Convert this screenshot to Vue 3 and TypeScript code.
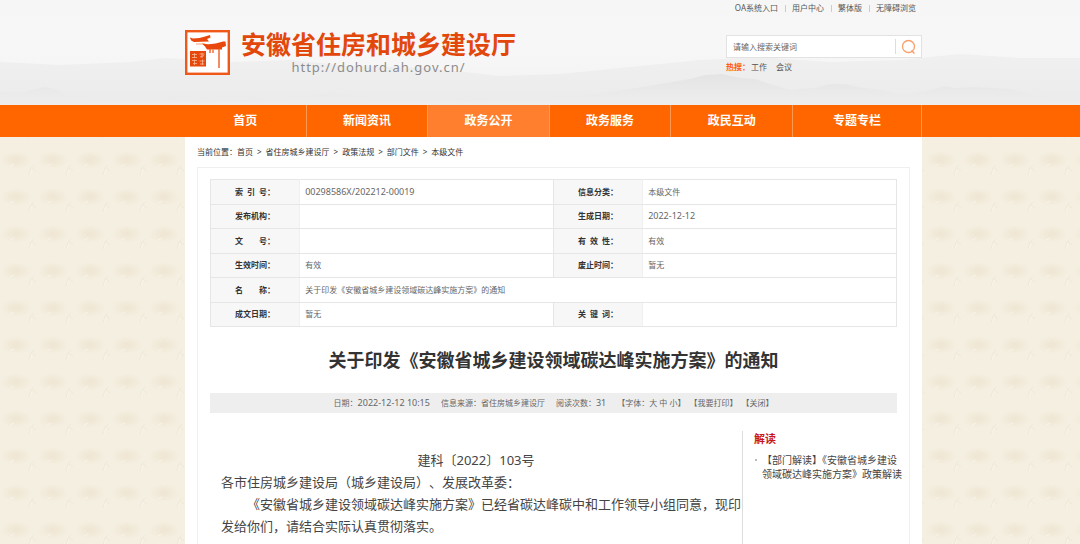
<script setup lang="ts">
import { ref } from 'vue'

interface Cell {
  label: string
  value: string
  wide?: boolean
}

const keyword = ref('')

const topLinks: string[] = ['OA系统入口', '用户中心', '繁体版', '无障碍浏览']
const hotWords: string[] = ['工作', '会议']
const navItems: string[] = ['首页', '新闻资讯', '政务公开', '政务服务', '政民互动', '专题专栏']
const activeNav = '政务公开'
const crumbs: string[] = ['首页', '省住房城乡建设厅', '政策法规', '部门文件', '本级文件']

const rows: Cell[][] = [
  [{ label: '索\u2002引\u2002号：', value: '00298586X/202212-00019' }, { label: '信息分类：', value: '本级文件' }],
  [{ label: '发布机构：', value: '' }, { label: '生成日期：', value: '2022-12-12' }],
  [{ label: '文\u3000\u3000号：', value: '' }, { label: '有\u2002效\u2002性：', value: '有效' }],
  [{ label: '生效时间：', value: '有效' }, { label: '废止时间：', value: '暂无' }],
  [{ label: '名\u3000\u3000称：', value: '关于印发《安徽省城乡建设领域碳达峰实施方案》的通知', wide: true }],
  [{ label: '成文日期：', value: '暂无' }, { label: '关\u2002键\u2002词：', value: '' }],
]

const isLatin = (text: string): boolean => /^[\x20-\x7e]+$/.test(text)
</script>

<template>
  <div class="page">
    <header class="header band">
      <svg class="hills" viewBox="0 0 1080 105" preserveAspectRatio="none" aria-hidden="true">
        <defs>
          <linearGradient id="far" x1="0" y1="0" x2="0" y2="1">
            <stop offset="0" stop-color="#f0f0f0" />
            <stop offset="1" stop-color="#ebebeb" />
          </linearGradient>
          <linearGradient id="near" x1="0" y1="0" x2="0" y2="1">
            <stop offset="0" stop-color="#e4e4e4" />
            <stop offset="1" stop-color="#eeeeee" />
          </linearGradient>
        </defs>
        <path fill="url(#far)" d="M0 62 L60 65 L130 62 L165 58 L230 62 L290 60 L350 66 L430 68 L500 76 L560 74 L620 68 L700 60 L760 57 L830 62 L900 60 L960 54 L1020 58 L1080 58 V105 H0Z" />
        <path fill="url(#near)" d="M0 92 L20 93 L32 90 L45 87 L58 90 L66 96 L110 101 L150 100 L200 103 L270 101 L330 93 L350 95 L370 100 L420 99 L470 102 L540 99 L580 96 L630 89 L660 84 L690 79 L705 75 L722 74 L740 78 L755 79 L770 84 L790 90 L815 88 L830 84 L845 84 L858 87 L880 90 L905 95 L925 91 L945 86 L955 88 L975 87 L1010 89 L1030 94 L1050 99 L1080 101 V105 H0Z" />
      </svg>
      <div class="wrap header-inner">
        <a class="brand" href="#">
          <svg class="emblem" viewBox="0 0 45 45" aria-hidden="true">
            <rect x="1.200" y="1.200" width="42.600" height="42.600" fill="#fff" stroke="#f0581a" stroke-width="2.400" />
            <path fill="#e8480c" d="M5 7.500 L8 8.500 Q15 8.500 20 6.500 L25 5 L25.500 7.500 L22 9 L24 11.500 L9 12 Q5.500 11 5 7.500Z" />
            <path fill="none" stroke="#f6a27d" d="M11 14 H20" />
            <path fill="#e8480c" d="M17 13.500 Q27 15.500 38 11.500 L40.500 11.500 L41 16 L37 17.500 V19.500 H22 L20 16.500Z" />
            <path fill="none" stroke="#ee6a34" stroke-width="1.500" d="M25 19 V23 M34 19 V38" />
            <path fill="#f4956c" d="M27 19 H29 V23 H27Z" />
            <rect x="5" y="21" width="16" height="15.500" fill="#e8480c" />
            <path fill="none" stroke="#f9b797" stroke-width=".8" d="M7 24.500 H12 M9.500 23 V28 M7 27.500 H12 M14.500 24 H19.500 M17 22.800 V28 M15 27 L19 25.500 M7 30.500 H12 M8 33.500 H12 M9.500 29.500 V35 M14.500 31 H19.500 M15 34 H19 M17.500 29.500 V35" />
          </svg>
          <span class="brand-text">
            <strong>安徽省住房和城乡建设厅</strong>
            <small>http://dohurd.ah.gov.cn/</small>
          </span>
        </a>
        <div class="tools">
          <nav class="top-links" aria-label="快捷入口">
            <a v-for="link in topLinks" :key="link" href="#">{{ link }}</a>
          </nav>
          <form class="search" @submit.prevent>
            <input v-model="keyword" type="text" placeholder="请输入搜索关键词" aria-label="请输入搜索关键词" />
            <button type="submit" aria-label="搜索">
              <svg viewBox="0 0 16 16" aria-hidden="true">
                <circle cx="7.500" cy="7.500" r="6" fill="none" stroke="#f9a06a" stroke-width="1.300" />
                <path d="M10.500 11.500 L13.500 14.500" stroke="#f9a06a" stroke-width="1.500" />
              </svg>
            </button>
          </form>
          <p class="hot">
            <b>热搜：</b>
            <a v-for="word in hotWords" :key="word" href="#">{{ word }}</a>
          </p>
        </div>
      </div>
    </header>

    <nav class="main-nav band" aria-label="主导航">
      <div class="wrap nav-grid">
        <a v-for="item in navItems" :key="item" href="#" :class="{ active: item === activeNav }">{{ item }}</a>
      </div>
    </nav>

    <main class="main band">
      <div class="wrap content">
        <nav class="crumbs" aria-label="当前位置">
          <span class="here">当前位置：</span>
          <template v-for="(crumb, i) in crumbs" :key="crumb">
            <span v-if="i > 0">&gt;</span>
            <a href="#">{{ crumb }}</a>
          </template>
        </nav>

        <article class="sheet">
          <table class="info">
            <colgroup>
              <col class="c-label" /><col class="c-value" /><col class="c-label" /><col class="c-value" />
            </colgroup>
            <tbody>
              <tr v-for="(row, r) in rows" :key="r">
                <template v-for="cell in row" :key="cell.label">
                  <th scope="row">{{ cell.label }}</th>
                  <td :colspan="cell.wide ? 3 : 1" :class="{ latin: isLatin(cell.value) }">{{ cell.value }}</td>
                </template>
              </tr>
            </tbody>
          </table>

          <h1>关于印发《安徽省城乡建设领域碳达峰实施方案》的通知</h1>

          <div class="meta">
            <span>日期：<span class="latin">2022-12-12 10:15</span></span>
            <span>信息来源：省住房城乡建设厅</span>
            <span>阅读次数：<span class="latin">31</span></span>
            <span class="actions">
              <span>【字体：<a href="#">大</a> <a href="#">中</a> <a href="#">小</a>】</span>
              <a href="#">【我要打印】</a>
              <a href="#">【关闭】</a>
            </span>
          </div>

          <div class="columns">
            <section class="body-text">
              <p class="doc-no">建科〔2022〕103号</p>
              <p>各市住房城乡建设局（城乡建设局）、发展改革委：</p>
              <p class="indent">《安徽省城乡建设领域碳达峰实施方案》已经省碳达峰碳中和工作领导小组同意，现印发给你们，请结合实际认真贯彻落实。</p>
            </section>
            <aside class="related">
              <h2>解读</h2>
              <ul>
                <li><a href="#">【部门解读】《安徽省城乡建设领域碳达峰实施方案》政策解读</a></li>
              </ul>
            </aside>
          </div>
        </article>
      </div>
    </main>
  </div>
</template>

<style>
body {
  margin: 0;
  background-color: #f4efe1;
  background-image: url("data:image/svg+xml,%3Csvg xmlns='http://www.w3.org/2000/svg' width='37' height='37'%3E%3Cdefs%3E%3CradialGradient id='g'%3E%3Cstop offset='0' stop-color='%23efe5d2'/%3E%3Cstop offset='1' stop-color='%23efe5d2' stop-opacity='0'/%3E%3C/radialGradient%3E%3C/defs%3E%3Cellipse cx='16' cy='12' rx='15' ry='9' fill='url(%23g)'/%3E%3Cpath d='M29 27 L31 20 L34 17 M32 20 L36 23' fill='none' stroke='%23e9e2d2' stroke-width='.6'/%3E%3Cpath d='M30 27 L32 21 M10 18 L14 16' fill='none' stroke='%23f9f6ec' stroke-width='.7'/%3E%3C/svg%3E");
}
</style>

<style scoped>
.page {
  min-height: 100vh;
  display: flex;
  flex-direction: column;
  font-family: "Noto Sans", "Noto Sans CJK SC", sans-serif;
  font-size: 8px;
  color: #555;
  text-spacing-trim: space-all;
}
a {
  color: inherit;
  text-decoration: none;
}
p,
h1,
h2,
ul {
  margin: 0;
  padding: 0;
}
.band {
  padding-left: 27px;
}
.wrap {
  box-sizing: border-box;
  width: 100%;
  max-width: 737px;
  margin: 0 auto;
}
.header {
  position: relative;
  background: linear-gradient(#f6f6f6, #f7f7f7 50%, #f1f1f1);
}
.hills {
  position: absolute;
  inset: 0;
  width: 100%;
  height: 100%;
}
.header-inner {
  position: relative;
  display: flex;
  justify-content: space-between;
  min-height: 105px;
}
.brand {
  display: flex;
  align-items: flex-start;
  gap: 11px;
  padding-top: 30px;
}
.emblem {
  width: 45px;
  height: 45px;
}
.brand-text {
  display: flex;
  flex-direction: column;
  align-items: center;
}
.brand-text strong {
  font-size: 25px;
  line-height: 28px;
  color: #e2470c;
}
.brand-text small {
  font-size: 13px;
  line-height: 18px;
  letter-spacing: 1px;
  color: #8c8c8c;
}
.tools {
  width: 196px;
}
.top-links {
  display: flex;
  justify-content: flex-end;
  padding-right: 6px;
  line-height: 16px;
  white-space: nowrap;
}
.top-links a + a {
  margin-left: 7px;
  padding-left: 7px;
  background: linear-gradient(#ccc, #ccc) left center / 1px 7px no-repeat;
}
.search {
  display: flex;
  align-items: center;
  box-sizing: border-box;
  height: 23px;
  margin-top: 19px;
  border: 1px solid #e2e2e2;
  background: #fff;
}
.search input {
  flex: 1;
  min-width: 0;
  padding: 0 6px;
  border: 0;
  outline: 0;
  background: none;
  font: inherit;
  color: #555;
}
.search input::placeholder {
  color: #666;
  opacity: 1;
}
.search button {
  display: flex;
  align-items: center;
  justify-content: center;
  width: 26px;
  height: 15px;
  padding: 0;
  border: 0;
  border-left: 1px solid #ddd;
  background: none;
}
.search button svg {
  width: 16px;
  height: 16px;
}
.hot {
  display: flex;
  gap: 9px;
  line-height: 18px;
}
.hot b {
  margin-right: -8px;
  color: #ff5a10;
}
.main-nav {
  background: #ff6600;
}
.nav-grid {
  display: grid;
  grid-template-columns: repeat(5, 33fr) 35fr;
}
.nav-grid a {
  border-right: 1px solid #ff9a55;
  font-size: 12px;
  font-weight: 700;
  line-height: 32px;
  text-align: center;
  color: #fff;
}
.nav-grid a.active {
  background: #ff7f2e;
}
.main {
  flex: 1;
  display: flex;
}
.content {
  display: flex;
  flex-direction: column;
  padding: 0 12px;
  background: #fff;
}
.crumbs {
  display: flex;
  gap: 4px;
  line-height: 30px;
  color: #333;
}
.crumbs .here {
  margin-right: -4px;
}
.sheet {
  flex: 1;
  display: flex;
  flex-direction: column;
  padding: 11px 12px 0;
  border: 1px solid #efefef;
  border-bottom: 0;
}
.info {
  width: 100%;
  height: 148px;
  border-collapse: collapse;
  table-layout: fixed;
}
.c-label {
  width: 13%;
}
.c-value {
  width: 37%;
}
.info th,
.info td {
  padding: 0 5px;
  border: 1px solid #e6e6e6;
  line-height: 16px;
}
.info th {
  padding: 0;
  border-right-color: #f0f0f0;
  background: #f7f7f7;
  color: #333;
  text-align: center;
  white-space: nowrap;
}
.info td {
  color: #666;
}
.latin,
.info td.latin {
  font-size: 9px;
}
h1 {
  margin-top: 18px;
  font-size: 18px;
  line-height: 30px;
  text-align: center;
  color: #333;
}
.meta {
  display: flex;
  justify-content: center;
  gap: 11px;
  margin-top: 18px;
  background: #eee;
  line-height: 20px;
  color: #666;
}
.actions {
  display: flex;
  gap: 4px;
}
.columns {
  flex: 1;
  display: flex;
  margin-top: 18px;
}
.body-text {
  flex: 1;
  padding: 18px 0 0 11px;
  font-size: 13px;
  line-height: 22px;
  color: #444;
}
.doc-no {
  padding-right: 11px;
  text-align: center;
}
.indent {
  text-indent: 2em;
}
.related {
  box-sizing: border-box;
  width: 155px;
  padding-left: 11px;
  border-left: 1px solid #ddd;
}
.related h2 {
  font-size: 11px;
  line-height: 16px;
  color: #c8161d;
}
.related ul {
  margin-top: 6px;
  margin-right: -5px;
  list-style: none;
}
.related li {
  display: flex;
  font-size: 10px;
  line-height: 14px;
  color: #444;
  text-spacing-trim: normal;
}
.related li::before {
  content: "";
  flex: none;
  width: 2px;
  height: 2px;
  margin: 6px 5px 0 1px;
  background: #bbb;
}
</style>
